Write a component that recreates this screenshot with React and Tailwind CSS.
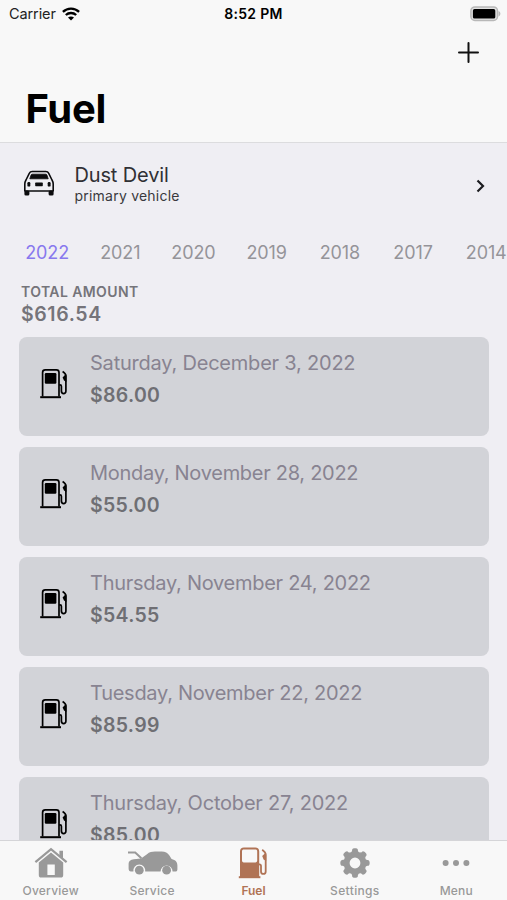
import React from "react";

const years = ["2022", "2021", "2020", "2019", "2018", "2017", "2014"];

const entries = [
  { date: "Saturday, December 3, 2022", amount: "$86.00", tracking: "tracking-[-0.21px]" },
  { date: "Monday, November 28, 2022", amount: "$55.00", tracking: "tracking-[-0.28px]" },
  { date: "Thursday, November 24, 2022", amount: "$54.55", tracking: "tracking-[-0.27px]" },
  { date: "Tuesday, November 22, 2022", amount: "$85.99", tracking: "tracking-[-0.27px]" },
  { date: "Thursday, October 27, 2022", amount: "$85.00", tracking: "tracking-[-0.2px]" },
];

function WifiIcon() {
  return (
    <svg width="18" height="14" viewBox="0 0 18 14" fill="none" stroke="#000" strokeWidth="2.3" className="-mt-[1px]">
      <path d="M0.9 4.9C5.4 0.5 12.6 0.5 17.1 4.9" />
      <path d="M3.8 8C6.7 5.3 11.3 5.3 14.2 8" />
      <path d="M9 13.6L6 10.6C7.7 9.2 10.3 9.2 12 10.6Z" fill="#000" stroke="none" />
    </svg>
  );
}

function BatteryIcon() {
  return (
    <svg width="31" height="16" viewBox="0 0 31 16" className="-mt-[1px]">
      <rect x="0.9" y="0.9" width="26.6" height="13.6" rx="4" fill="#e2e2e2" stroke="#b8b8b8" strokeWidth="1.5" />
      <rect x="2.9" y="3.1" width="22.4" height="9.4" rx="1.6" fill="#000" />
      <path d="M28.5 5C31 6 31 9.4 28.5 10.4Z" fill="#b8b8b8" />
    </svg>
  );
}

function CarFrontIcon() {
  return (
    <svg width="32" height="26" viewBox="0 0 32 26" fill="none" stroke="#0c0c0e" strokeWidth="1.6" strokeLinejoin="round" className="-mt-[5px]">
      <path d="M3 10L6.4 3.2C7 1.9 7.8 1.5 9.2 1.5H22.8C24.2 1.5 25 1.9 25.6 3.2L29 10C29.8 11.4 30.2 12.4 30.2 14V21H1.8V14C1.8 12.4 2.2 11.4 3 10Z" />
      <path d="M9.4 4.2H22.6C23.4 4.2 23.8 4.6 24 5.2L25.2 8.8H6.8L8 5.2C8.2 4.6 8.6 4.2 9.4 4.2Z" fill="#0c0c0e" strokeWidth="0.8" />
      <rect x="12.2" y="12.6" width="7.6" height="3.6" rx="0.6" fill="#0c0c0e" stroke="none" />
      <rect x="4.4" y="12" width="2.9" height="4.6" rx="1.2" fill="#0c0c0e" stroke="none" />
      <rect x="24.7" y="12" width="2.9" height="4.6" rx="1.2" fill="#0c0c0e" stroke="none" />
      <rect x="1.4" y="20.6" width="5" height="4.8" rx="1.5" fill="#0c0c0e" stroke="none" />
      <rect x="25.6" y="20.6" width="5" height="4.8" rx="1.5" fill="#0c0c0e" stroke="none" />
    </svg>
  );
}

function PumpIcon() {
  return (
    <svg width="28" height="31" viewBox="0 0 28 31" fill="none" stroke="#000" strokeWidth="1.7">
      <path d="M2.6 28.6V4.4C2.6 2.6 3.6 1.8 5.2 1.8H16.4C18 1.8 19 2.6 19 4.4V28.6" />
      <path d="M0.2 29.2H21" strokeWidth="2" />
      <rect x="4.8" y="5" width="11.6" height="10.8" rx="1.2" fill="#000" stroke="none" />
      <path d="M19.2 16.8H20C21 16.8 21.4 17.4 21.4 18.4V23C21.4 26.4 26 26.4 25.9 23V8C25.9 6 24.6 4.6 22.6 3.4" />
      <path d="M22.6 9.4L25.2 6.8H26.4V14L24 12.4Z" fill="#000" stroke="none" />
    </svg>
  );
}

function ActivePumpIcon() {
  return (
    <svg width="30" height="32" viewBox="0 0 30 32" fill="none" stroke="#b07355" strokeWidth="1.8">
      <path fillRule="evenodd" d="M2 30V4.4C2 1.8 3.4 0.4 6 0.4H17.2C19.8 0.4 21.2 1.8 21.2 4.4V30ZM6 2.4C4.6 2.4 4 3 4 4.4V13.6C4 14.8 4.6 15.4 5.8 15.4H17.4C18.6 15.4 19.2 14.8 19.2 13.6V4.4C19.2 3 18.6 2.4 17.2 2.4Z" fill="#b07355" stroke="none" />
      <path d="M0.8 30.2H22.4" strokeWidth="2" />
      <path d="M20.8 17.4H21.4C22.6 17.4 23 18 23 19V24.4C23 27.8 27.7 27.8 27.7 24.4V8C27.7 6 26.2 4.2 24.2 2.8" />
      <path d="M24.2 9L26.8 6.4H28.2V14L25.6 12.6Z" fill="#b07355" stroke="none" />
    </svg>
  );
}

function HouseIcon() {
  return (
    <svg width="34" height="32" viewBox="0 0 34 32" fill="#999" className="-mt-[1px]">
      <path d="M25.4 3.8H29V11.6L25.4 8.6Z" />
      <path d="M1.4 15.2L17 2.2L32.6 15.2" fill="none" stroke="#999" strokeWidth="2.2" />
      <path fillRule="evenodd" d="M17 5.4L29.2 15.6V28C29.2 29.8 28.4 30.6 26.6 30.6H7.4C5.6 30.6 4.8 29.8 4.8 28V15.6ZM13.4 17.6V28H20.8V17.6Z" />
    </svg>
  );
}

function ServiceIcon() {
  return (
    <svg width="52" height="26" viewBox="0 0 52 26" fill="#999" className="ml-[2px]">
      <path d="M1 2.4H8.2L14.4 8.2" fill="none" stroke="#999" strokeWidth="2" />
      <path d="M14 8.6L20 4.2C22.4 2.2 25 1.6 28 1.6H34.6C38.4 1.6 40.6 3 42.4 5.6L44.6 9C48.6 10 50.4 12 50.4 15.4V19.4C50.4 20.6 49.6 21.6 48.4 21.6H45.6A6 6 0 1 0 33.6 21.6H18.2A6 6 0 1 0 6.4 21.6H4C2.4 21.4 1.6 20 1.6 18.4V13.8C1.6 11 3.4 9.6 6.8 9.2Z" />
      <circle cx="12.3" cy="20.2" r="4.4" />
      <circle cx="39.6" cy="20.2" r="4.4" />
    </svg>
  );
}

const gearTeeth = [0, 45, 90, 135, 180, 225, 270, 315];

function GearIcon() {
  return (
    <svg width="30" height="30" viewBox="-15 -15 30 30" fill="#999">
      <circle r="8.4" fill="none" stroke="#999" strokeWidth="6" />
      {gearTeeth.map((a) => (
        <path key={a} transform={`rotate(${a})`} d="M-4 -10.5C-3 -11.5 -2.9 -12.2 -2.8 -13.4C-2.6 -15.1 2.6 -15.1 2.8 -13.4C2.9 -12.2 3 -11.5 4 -10.5Z" />
      ))}
    </svg>
  );
}

function DotsIcon() {
  return (
    <svg width="28" height="8" viewBox="0 0 28 8" fill="#999">
      <circle cx="3.6" cy="4" r="3" />
      <circle cx="14" cy="4" r="3" />
      <circle cx="24.4" cy="4" r="3" />
    </svg>
  );
}

const tabs = [
  { label: "Overview", Icon: HouseIcon, style: "font-medium tracking-[0.25px] text-[#999]" },
  { label: "Service", Icon: ServiceIcon, style: "font-medium tracking-[0.25px] text-[#999]" },
  { label: "Fuel", Icon: ActivePumpIcon, style: "font-semibold text-[#b07355]" },
  { label: "Settings", Icon: GearIcon, style: "font-medium tracking-[0.35px] text-[#999]" },
  { label: "Menu", Icon: DotsIcon, style: "font-medium tracking-[0.2px] text-[#999]" },
];

export default function App() {
  return (
    <div className="flex h-[900px] w-[507px] flex-col overflow-hidden bg-[#efeef3] font-['Inter',sans-serif]">
      <header className="h-[143px] shrink-0 border-b border-[#dcdcde] bg-[#f8f8f8]">
        <div className="grid h-7 grid-cols-3 items-center">
          <div className="flex items-center gap-[6px] pl-[9px]">
            <span className="text-[14.5px] leading-7 tracking-[-0.1px] text-[#222]">Carrier</span>
            <WifiIcon />
          </div>
          <span className="text-center text-[14px] font-semibold leading-7 tracking-[0.3px] text-black">8:52 PM</span>
          <div className="flex justify-end pr-[6px]">
            <BatteryIcon />
          </div>
        </div>
        <div className="flex h-12 items-center justify-end pr-[28px]">
          <svg width="21" height="21" viewBox="0 0 21 21" stroke="#111" strokeWidth="2" strokeLinecap="round">
            <path d="M10.5 1V20M1 10.5H20" />
          </svg>
        </div>
        <h1 className="pl-[25.5px] text-[40px] font-bold leading-[66px] tracking-[-0.3px] text-black">Fuel</h1>
      </header>

      <main className="min-h-0 flex-1 overflow-hidden">
        <section className="flex h-[85px] items-center pl-[23px] pr-[22px]">
          <CarFrontIcon />
          <div className="-mt-[4px] ml-[19.5px] flex-1">
            <div className="text-[20px] leading-6 tracking-[-0.15px] text-[#303034]">Dust Devil</div>
            <div className="text-[14px] leading-[18px] tracking-[0.22px] text-[#3a3a3e]">primary vehicle</div>
          </div>
          <svg width="9" height="14" viewBox="0 0 9 14" fill="none" stroke="#1c1c20" strokeWidth="2.2">
            <path d="M1.5 1.5L7 7L1.5 12.5" />
          </svg>
        </section>

        <div className="ml-[10.5px] flex h-[49px] w-[520px] items-center">
          {years.map((y, i) => (
            <span key={y} className={i === 0 ? "w-[73.2px] shrink-0 text-center text-[18px] tracking-[-0.1px] text-[#8878ee]" : "w-[73.2px] shrink-0 text-center text-[18px] tracking-[-0.1px] text-[#959499]"}>
              {y}
            </span>
          ))}
        </div>

        <section className="h-[60px] pl-[21px] pt-[6px] text-[#75747a]">
          <div className="text-[14px] font-semibold leading-[18px] tracking-[0.4px]">TOTAL AMOUNT</div>
          <div className="pt-[1px] text-[19.5px] font-semibold leading-6 tracking-[0.6px]">$616.54</div>
        </section>

        <ul className="flex flex-col gap-[11px] pl-[19px] pr-[18px]">
          {entries.map((e) => (
            <li key={e.date} className="flex h-[99px] shrink-0 rounded-lg bg-[#d2d3d8] pl-[21px]">
              <div className="mt-[31px] w-[50px] shrink-0">
                <PumpIcon />
              </div>
              <div className="pt-[14px]">
                <div className={`text-[20px] leading-6 text-[#888391] ${e.tracking}`}>{e.date}</div>
                <div className="mt-2 text-[19.5px] font-semibold leading-6 tracking-[0.3px] text-[#6f6f74]">{e.amount}</div>
              </div>
            </li>
          ))}
        </ul>
      </main>

      <nav className="grid h-[60px] shrink-0 grid-cols-5 border-t border-[#d5d5d8] bg-[#f8f8f8]">
        {tabs.map(({ label, Icon, style }) => (
          <div key={label} className="flex flex-col items-center">
            <div className="flex h-[44px] items-center justify-center">
              <Icon />
            </div>
            <span className={`text-[12px] leading-[12px] ${style}`}>{label}</span>
          </div>
        ))}
      </nav>
    </div>
  );
}
